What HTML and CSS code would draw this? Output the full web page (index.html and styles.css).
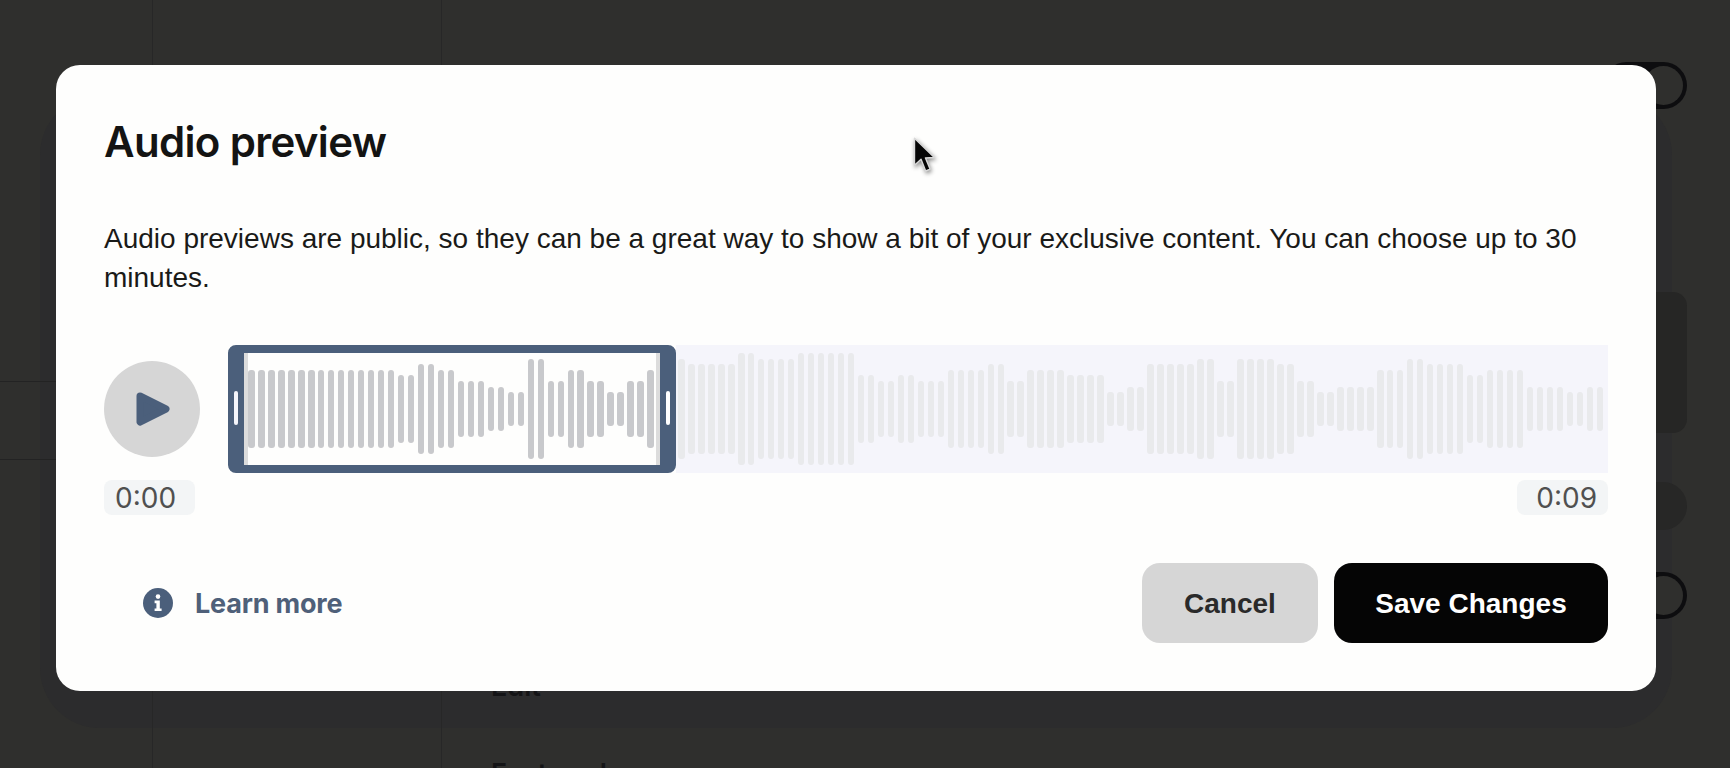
FILE: index.html
```html
<!DOCTYPE html>
<html lang="en">
<head>
<meta charset="utf-8">
<title>Audio preview</title>
<link rel="stylesheet" href="styles.css">
</head>
<body>
<div class="page">
  <div class="rail"><div class="rail-a"></div><div class="rail-b"></div></div>
  <div class="side"></div>
  <div class="main">
    <div class="toggle toggle-top"><span class="knob"></span></div>
    <div class="dim-card"></div>
    <div class="dim-pill"></div>
    <div class="toggle toggle-low"><span class="knob"></span></div>
    <div class="dim-label">Edit</div>
    <div class="dim-label dim-label-next">Featured</div>
  </div>
</div>

<section class="modal">
  <h1 class="title">Audio preview</h1>
  <p class="desc">Audio previews are public, so they can be a great way to show a bit of your exclusive content. You can choose up to 30 minutes.</p>

  <div class="player">
    <button class="play" aria-label="Play">
      <svg width="34" height="34" viewBox="0 0 34 34"><path d="M4 4 L30 17 L4 30 Z" fill="#4b5f7b" stroke="#4b5f7b" stroke-width="7" stroke-linejoin="round"/></svg>
    </button>
    <div class="wave">
      <div class="selection">
        <span class="handle handle-l"></span>
        <div class="bars">
          <span class="h78"></span><span class="h78"></span><span class="h78"></span><span class="h78"></span><span class="h78"></span><span class="h78"></span><span class="h78"></span><span class="h78"></span><span class="h78"></span><span class="h78"></span><span class="h78"></span><span class="h78"></span><span class="h78"></span><span class="h78"></span><span class="h78"></span>
          <span class="h68"></span><span class="h68"></span><span class="h90"></span><span class="h90"></span><span class="h78"></span><span class="h78"></span><span class="h56"></span><span class="h56"></span><span class="h56"></span><span class="h44"></span><span class="h44"></span><span class="h34"></span><span class="h34"></span><span class="h100"></span><span class="h100"></span><span class="h56"></span><span class="h56"></span><span class="h78"></span><span class="h78"></span><span class="h56"></span><span class="h56"></span><span class="h34"></span><span class="h34"></span><span class="h56"></span><span class="h56"></span><span class="h78"></span>
        </div>
        <span class="handle handle-r"></span>
      </div>
      <div class="bars rest">
        <span class="h100"></span><span class="h90"></span><span class="h90"></span><span class="h90"></span><span class="h90"></span><span class="h90"></span><span class="h112"></span><span class="h112"></span><span class="h100"></span><span class="h100"></span><span class="h100"></span><span class="h100"></span>
        <span class="h112"></span><span class="h112"></span><span class="h112"></span><span class="h112"></span><span class="h112"></span><span class="h112"></span><span class="h68"></span><span class="h68"></span><span class="h56"></span><span class="h56"></span><span class="h68"></span><span class="h68"></span><span class="h56"></span><span class="h56"></span><span class="h56"></span>
        <span class="h78"></span><span class="h78"></span><span class="h78"></span><span class="h78"></span><span class="h90"></span><span class="h90"></span><span class="h56"></span><span class="h56"></span><span class="h78"></span><span class="h78"></span><span class="h78"></span><span class="h78"></span><span class="h68"></span><span class="h68"></span><span class="h68"></span><span class="h68"></span><span class="h34"></span><span class="h34"></span><span class="h44"></span><span class="h44"></span>
        <span class="h90"></span><span class="h90"></span><span class="h90"></span><span class="h90"></span><span class="h90"></span><span class="h100"></span><span class="h100"></span><span class="h56"></span><span class="h56"></span><span class="h100"></span><span class="h100"></span><span class="h100"></span><span class="h100"></span><span class="h90"></span><span class="h90"></span><span class="h56"></span><span class="h56"></span><span class="h34"></span><span class="h34"></span><span class="h44"></span><span class="h44"></span><span class="h44"></span><span class="h44"></span>
        <span class="h78"></span><span class="h78"></span><span class="h78"></span><span class="h100"></span><span class="h100"></span><span class="h90"></span><span class="h90"></span><span class="h90"></span><span class="h90"></span><span class="h68"></span><span class="h68"></span><span class="h78"></span><span class="h78"></span><span class="h78"></span><span class="h78"></span><span class="h44"></span><span class="h44"></span><span class="h44"></span><span class="h44"></span><span class="h34"></span><span class="h34"></span><span class="h44"></span><span class="h44"></span>
      </div>
    </div>
  </div>

  <div class="times">
    <span class="time">0:00</span>
    <span class="time time-end">0:09</span>
  </div>

  <div class="footer">
    <a class="learn" href="#">
      <svg class="info" width="30" height="30" viewBox="0 0 30 30"><circle cx="15" cy="15" r="15" fill="#4b5f7b"/><circle cx="15" cy="8.6" r="2.3" fill="#fff"/><path d="M11.6 12.6 H16.8 V20.4 H18.6 V23 H11.6 V20.4 H13.4 V15.2 H11.6 Z" fill="#fff"/></svg>
      <span>Learn more</span>
    </a>
    <div class="actions">
      <button class="btn btn-cancel">Cancel</button>
      <button class="btn btn-save">Save Changes</button>
    </div>
  </div>
</section>

<svg class="cursor" width="28" height="42" viewBox="0 0 24 36"><path d="M3 2 L3 25 L8.6 20 L12.6 30 L16.4 28.4 L12.4 18.8 L20 18.4 Z" fill="#050505" stroke="#d8d8d8" stroke-width="1.2" stroke-linejoin="round"/></svg>
</body>
</html>
```
FILE: styles.css
```css
* { box-sizing: border-box; }
html, body { margin: 0; height: 100%; }
body {
  position: relative;
  overflow: hidden;
  background: #2f2f2d;
  font-family: Inter, "Liberation Sans", sans-serif;
}
.page { display: flex; height: 768px; overflow: hidden; }
.rail { width: 153px; flex: none; border-right: 1px solid #272727; }
.rail-a { height: 382px; border-bottom: 1px solid #232323; }
.rail-b { height: 78px; border-bottom: 1px solid #232323; }
.side { width: 289px; flex: none; border-right: 1px solid #272727; }
.main {
  flex: 1;
  display: flex;
  flex-direction: column;
  align-items: flex-end;
  padding: 62px 43px 0 49px;
}
.toggle {
  width: 84px;
  height: 47px;
  flex: none;
  display: flex;
  justify-content: flex-end;
  align-items: center;
  background: #0d0d0f;
  border-radius: 24px;
  padding-right: 4px;
}
.knob { width: 39px; height: 39px; border-radius: 50%; background: #2f2f2d; }
.dim-card { width: 300px; height: 141px; flex: none; margin-top: 183px; background: #262625; border-radius: 14px; }
.dim-pill { width: 120px; height: 48px; flex: none; margin-top: 49px; background: #272726; border-radius: 24px; }
.toggle-low { margin-top: 42px; }
.dim-label {
  align-self: flex-start;
  flex: none;
  margin-top: 51px;
  height: 34px;
  font-size: 27px;
  line-height: 34px;
  font-weight: 600;
  color: #141416;
}
.dim-label-next { margin-top: 53px; }

.modal {
  position: absolute;
  left: 56px;
  top: 65px;
  width: 1600px;
  height: 626px;
  padding: 48px;
  background: #fefefd;
  border-radius: 24px;
}
.modal::before {
  content: "";
  position: absolute;
  z-index: -1;
  top: 30px;
  left: -16px;
  right: -16px;
  bottom: -37px;
  border-radius: 60px;
  background: #2c2c2d;
}
.title {
  margin: 0;
  height: 56px;
  font-size: 42px;
  line-height: 58px;
  font-weight: 600;
  letter-spacing: -0.65px;
  color: #141413;
}
.desc {
  margin: 50px 0 0;
  font-family: "Liberation Sans", Arial, sans-serif;
  font-size: 28px;
  line-height: 39px;
  font-weight: 400;
  color: #1a1a18;
}
.player { display: flex; align-items: center; gap: 28px; margin-top: 48px; }
.play {
  width: 96px;
  height: 96px;
  flex: none;
  display: flex;
  align-items: center;
  justify-content: center;
  padding: 0 0 0 2px;
  border: 0;
  border-radius: 50%;
  background: #d6d6d6;
}
.wave { flex: 1; display: flex; height: 128px; }
.selection {
  position: relative;
  width: 448px;
  flex: none;
  border: solid #4b5f7b;
  border-width: 8px 16px;
  border-radius: 8px;
  background: #fefefd;
}
.selection .bars {
  height: 100%;
  border-left: 4px solid #dcdcdc;
  border-right: 4px solid #dcdcdc;
  overflow: hidden;
}
.handle {
  position: absolute;
  top: 38px;
  width: 4px;
  height: 34px;
  border-radius: 2px;
  background: #f5f5fb;
}
.handle-l { left: -10px; }
.handle-r { right: -10px; background: #fff; }
.bars { display: flex; align-items: center; gap: 3.4px; }
.bars span { flex: none; width: 6.6px; border-radius: 3px; background: #c8c9cc; }
.rest { flex: 1; padding-left: 2px; background: #f5f5fb; overflow: hidden; }
.rest span { background: #e9eaec; }
.h34 { height: 34px; }
.h44 { height: 44px; }
.h56 { height: 56px; }
.h68 { height: 68px; }
.h78 { height: 78px; }
.h90 { height: 90px; }
.h100 { height: 100px; }
.h112 { height: 112px; }

.times { display: flex; justify-content: space-between; margin-top: 7px; }
.time {
  width: 91px;
  height: 35px;
  padding: 0 11px;
  border-radius: 8px;
  background: #f3f5f6;
  font-size: 28px;
  line-height: 36px;
  color: #505050;
}
.time-end { text-align: right; }
.footer { display: flex; align-items: center; justify-content: space-between; margin-top: 48px; }
.learn {
  display: flex;
  align-items: center;
  gap: 22px;
  padding-left: 39px;
  font-size: 27px;
  font-weight: 700;
  letter-spacing: -0.2px;
  color: #4f6079;
  text-decoration: none;
}
.info { flex: none; }
.actions { display: flex; gap: 16px; }
.btn {
  height: 80px;
  border: 0;
  padding: 2px 0 0;
  border-radius: 18px;
  font-family: "Liberation Sans", Arial, sans-serif;
  font-size: 28px;
  font-weight: 700;
}
.btn-cancel { width: 176px; background: #d6d6d6; color: #2a2a2a; }
.btn-save { width: 274px; background: #050505; color: #fff; }
.cursor {
  position: absolute;
  left: 911px;
  top: 136px;
  filter: drop-shadow(1px 2px 2px rgba(0, 0, 0, 0.45));
}
```
